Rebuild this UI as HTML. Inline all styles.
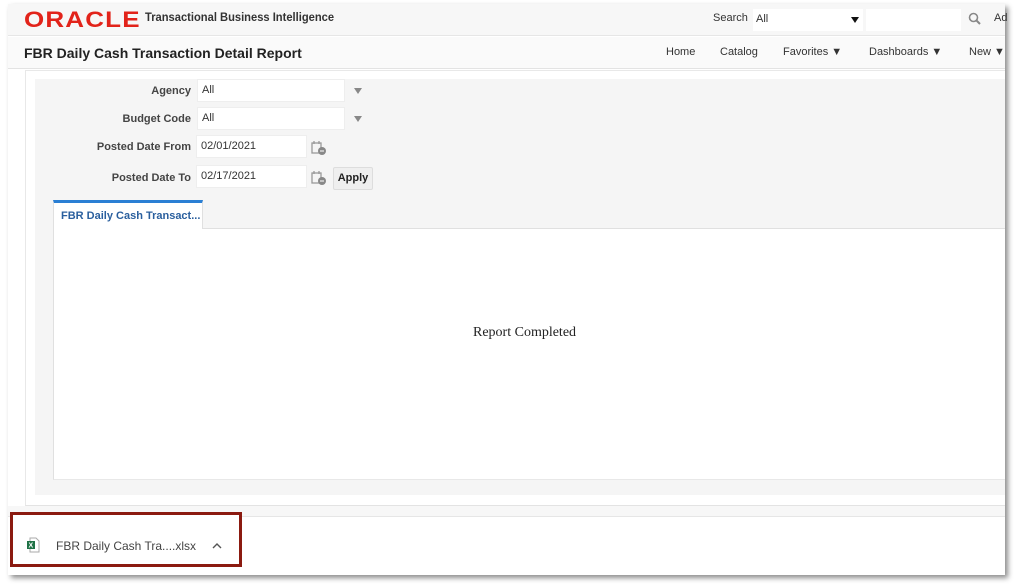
<!DOCTYPE html>
<html><head><style>
*{margin:0;padding:0;box-sizing:border-box}
body{width:1017px;height:585px;background:#fff;position:relative;overflow:hidden;font-family:"Liberation Sans",Arial,sans-serif;color:#333}
.win{position:absolute;left:8px;top:4px;width:997px;height:571px;background:#fff;box-shadow:3px 3px 5px rgba(0,0,0,.45)}
.a{position:absolute}
.hdr{left:0;top:0;width:997px;height:32px;background:#f7f7f7;border-bottom:1px solid #e6e6e6}
.logo{left:16px;top:3px;color:#e2231a;font-size:22px;font-weight:bold;letter-spacing:1px;transform:scaleX(1.18);transform-origin:left}
.tbi{left:137px;top:8px;font-size:11.5px;font-weight:bold;color:#333;transform:scaleX(.97);transform-origin:left}
.row2{left:0;top:33px;width:997px;height:32px;background:#fafafa;border-bottom:1px solid #e3e3e3}
.title{left:16px;top:41px;font-size:14px;font-weight:bold;color:#222}
.nav{top:42px;font-size:11px;color:#333}
.lbl{font-size:11px;font-weight:bold;color:#444;text-align:right;width:160px}
.inp{background:#fff;border:1px solid #eee;font-size:11px;color:#333;padding:4px 4px}
.tri{width:0;height:0;border-left:4px solid transparent;border-right:4px solid transparent;border-top:6px solid #888}
</style></head><body>
<div class="win">
<div class="a hdr"></div>
<div class="a logo">ORACLE</div>
<div class="a tbi">Transactional Business Intelligence</div>
<div class="a" style="left:705px;top:8px;font-size:11px">Search</div>
<div class="a" style="left:745px;top:5px;width:110px;height:22px;background:#fff"></div>
<div class="a" style="left:748px;top:9px;font-size:11px">All</div>
<div class="a" style="left:843px;top:13px;border-left:4px solid transparent;border-right:4px solid transparent;border-top:6px solid #111"></div>
<div class="a" style="left:858px;top:5px;width:95px;height:22px;background:#fff"></div>
<svg class="a" style="left:960px;top:8px" width="14" height="14"><circle cx="5.5" cy="5.5" r="4" fill="none" stroke="#888" stroke-width="1.6"/><line x1="8.5" y1="8.5" x2="12" y2="12" stroke="#888" stroke-width="2"/></svg>
<div class="a" style="left:986px;top:8px;font-size:11px">Ad</div>
<div class="a row2"></div>
<div class="a title">FBR Daily Cash Transaction Detail Report</div>
<div class="a nav" style="left:658px">Home</div>
<div class="a nav" style="left:712px">Catalog</div>
<div class="a nav" style="left:775px">Favorites &#9660;</div>
<div class="a nav" style="left:861px">Dashboards &#9660;</div>
<div class="a nav" style="left:961px">New &#9660;</div>
<div class="a" style="left:17px;top:66px;width:980px;height:436px;border-top:1px solid #e8e8e8;border-left:1px solid #e8e8e8;border-bottom:1px solid #e3e3e3"></div>
<div class="a" style="left:27px;top:75px;width:970px;height:416px;background:#f5f5f5"></div>
<div class="a lbl" style="left:23px;top:81px">Agency</div>
<div class="a inp" style="left:189px;top:75px;width:148px;height:23px">All</div>
<div class="a tri" style="left:346px;top:84px"></div>
<div class="a lbl" style="left:23px;top:109px">Budget Code</div>
<div class="a inp" style="left:189px;top:103px;width:148px;height:23px">All</div>
<div class="a tri" style="left:346px;top:112px"></div>
<div class="a lbl" style="left:23px;top:137px">Posted Date From</div>
<div class="a inp" style="left:188px;top:131px;width:111px;height:23px">02/01/2021</div>
<div class="a lbl" style="left:23px;top:168px">Posted Date To</div>
<div class="a inp" style="left:188px;top:161px;width:111px;height:23px">02/17/2021</div>
<svg class="a" style="left:303px;top:136px" width="16" height="16"><rect x="1" y="3" width="9" height="10" fill="none" stroke="#999" stroke-width="1.3"/><line x1="3" y1="1" x2="3" y2="4" stroke="#999" stroke-width="1.3"/><line x1="8" y1="1" x2="8" y2="4" stroke="#999" stroke-width="1.3"/><circle cx="11" cy="11" r="4" fill="#888"/><line x1="9" y1="11" x2="13" y2="11" stroke="#fff"/></svg>
<svg class="a" style="left:303px;top:166px" width="16" height="16"><rect x="1" y="3" width="9" height="10" fill="none" stroke="#999" stroke-width="1.3"/><line x1="3" y1="1" x2="3" y2="4" stroke="#999" stroke-width="1.3"/><line x1="8" y1="1" x2="8" y2="4" stroke="#999" stroke-width="1.3"/><circle cx="11" cy="11" r="4" fill="#888"/><line x1="9" y1="11" x2="13" y2="11" stroke="#fff"/></svg>
<div class="a" style="left:325px;top:163px;width:40px;height:23px;background:#efefef;border:1px solid #ddd;border-radius:2px;font-size:11px;font-weight:bold;color:#222;text-align:center;line-height:21px">Apply</div>
<div class="a" style="left:45px;top:224px;width:952px;height:1px;background:#e0e0e0"></div>
<div class="a" style="left:45px;top:196px;width:150px;height:30px;background:#fff;border-top:3px solid #2a7fd4;border-left:1px solid #e0e0e0;border-right:1px solid #e0e0e0;font-size:11px;font-weight:bold;color:#2a5f9e;padding:7px 0 0 7px">FBR Daily Cash Transact...</div>
<div class="a" style="left:45px;top:225px;width:952px;height:251px;background:#fff;border-left:1px solid #e0e0e0;border-bottom:1px solid #e8e8e8"></div>
<div class="a" style="left:465px;top:321px;font-family:'Liberation Serif',serif;font-size:14px;color:#222">Report Completed</div>
<div class="a" style="left:0;top:502px;width:997px;height:11px;background:#f7f7f7;border-bottom:1px solid #e6e6e6"></div>
<div class="a" style="left:2px;top:508px;width:232px;height:55px;border:3px solid #8b1a10;background:#fff"></div>
<svg class="a" style="left:18px;top:533px" width="14" height="16"><path d="M4 1h6l3 3v11H4z" fill="#fff" stroke="#aaa"/><rect x="1" y="4" width="8" height="8" fill="#1e7145"/><text x="2.5" y="10.5" font-size="7" fill="#fff" font-family="Liberation Sans" font-weight="bold">X</text></svg>
<div class="a" style="left:48px;top:535px;font-size:12px;color:#444">FBR Daily Cash Tra....xlsx</div>
<svg class="a" style="left:204px;top:538px" width="10" height="8"><path d="M1 6l4-4 4 4" fill="none" stroke="#555" stroke-width="1.4"/></svg>
</div>
</body></html>
